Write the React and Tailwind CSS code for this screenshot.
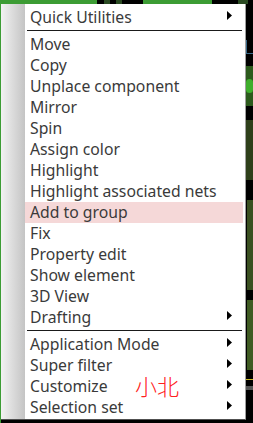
import React from 'react';

const groups = [
  [{ label: 'Quick Utilities', sub: true }],
  [
    { label: 'Move' },
    { label: 'Copy' },
    { label: 'Unplace component' },
    { label: 'Mirror' },
    { label: 'Spin' },
    { label: 'Assign color' },
    { label: 'Highlight' },
    { label: 'Highlight associated nets' },
    { label: 'Add to group', active: true },
    { label: 'Fix' },
    { label: 'Property edit' },
    { label: 'Show element' },
    { label: '3D View' },
    { label: 'Drafting', sub: true },
  ],
  [
    { label: 'Application Mode', sub: true },
    { label: 'Super filter', sub: true },
    { label: 'Customize', sub: true },
    { label: 'Selection set', sub: true },
  ],
];

const Arrow = () => (
  <svg width="5" height="9" viewBox="0 0 5 9" className="ml-auto mr-[11px] -mt-[4px]">
    <path d="M0 0 L5 4.5 L0 9 Z" fill="#000" />
  </svg>
);

const Row = ({ label, sub, active }) => (
  <div className={`h-[21px] flex items-center pl-[5px] mr-[2px] ${active ? 'bg-[#f5d8d8]' : ''}`}>
    <span className="text-[15.75px] leading-none text-[#3a3a3a] whitespace-nowrap">{label}</span>
    {sub && <Arrow />}
  </div>
);

export default function App() {
  return (
    <div
      className="w-[253px] h-[423px] bg-black overflow-hidden flex flex-col"
      style={{ fontFamily: '"Noto Sans", "Open Sans", sans-serif' }}
    >
      {/* board strip above the menu */}
      <div className="h-[4px] flex shrink-0">
        <div className="w-[97px] bg-[#3c9c34]" />
        <div className="w-[7px]" />
        <div className="w-[6px] bg-[#2a4a22]" />
        <div className="w-[6px]" />
        <div className="w-[6px] bg-[#2a4a22]" />
        <div className="w-[21px]" />
        <div className="w-[69px] bg-[#3c9c34]" />
        <div className="w-[26px]" />
        <div className="w-[10px] bg-[#2a4a22]" />
      </div>

      <div className="flex flex-1">
        <div className="w-[1px] bg-[#3c9c34]" />

        <div className="relative w-[245px] h-[416px] bg-white border-r border-b border-r-[#a0a0a0] border-b-[#505050] flex">
          <div className="w-[24px] shrink-0 bg-gradient-to-r from-[#f2f2f2] to-[#c4c4c4]" />
          <div className="flex-1 pt-[3px]">
            {groups.map((items, gi) => (
              <div key={gi}>
                {gi > 0 && <div className="mt-[2px] mb-[3px] ml-[2px] mr-[3px] h-[1px] bg-[#1a1a1a]" />}
                {items.map((it) => (
                  <Row key={it.label} {...it} />
                ))}
              </div>
            ))}
          </div>
          {/* watermark */}
          <span
            className="absolute left-[134px] top-[370px] text-[22px] leading-none text-[#ff2020] font-extralight"
            style={{ fontFamily: '"Noto Sans CJK SC", sans-serif' }}
          >
            小北
          </span>
        </div>

        {/* board edge to the right */}
        <div className="flex-1 flex flex-col">
          <div className="h-[36px]" />
          <div className="h-[14px] border-l border-b border-[#3a6a8a]" />
          <div className="h-[12px]" />
          <div className="h-[40px] bg-[#2c5a1c] flex flex-col justify-center">
            <div className="h-[14px] rounded-full bg-[#3fae2c]" />
          </div>
          <div className="h-[14px]" />
          <div className="h-[60px] bg-[#2e3f1a]" />
          <div className="h-[20px]" />
          <div className="h-[90px] ml-[1px] bg-[#3a4f20]" />
          <div className="h-[10px]" />
          <div className="h-[70px] ml-[1px] bg-[#3f5a22]" />
          <div className="h-[9px]" />
          <div className="h-[1px] bg-[#c8b820]" />
          <div className="h-[6px]" />
          <div className="h-[4px] bg-[#555]" />
        </div>
      </div>
    </div>
  );
}
